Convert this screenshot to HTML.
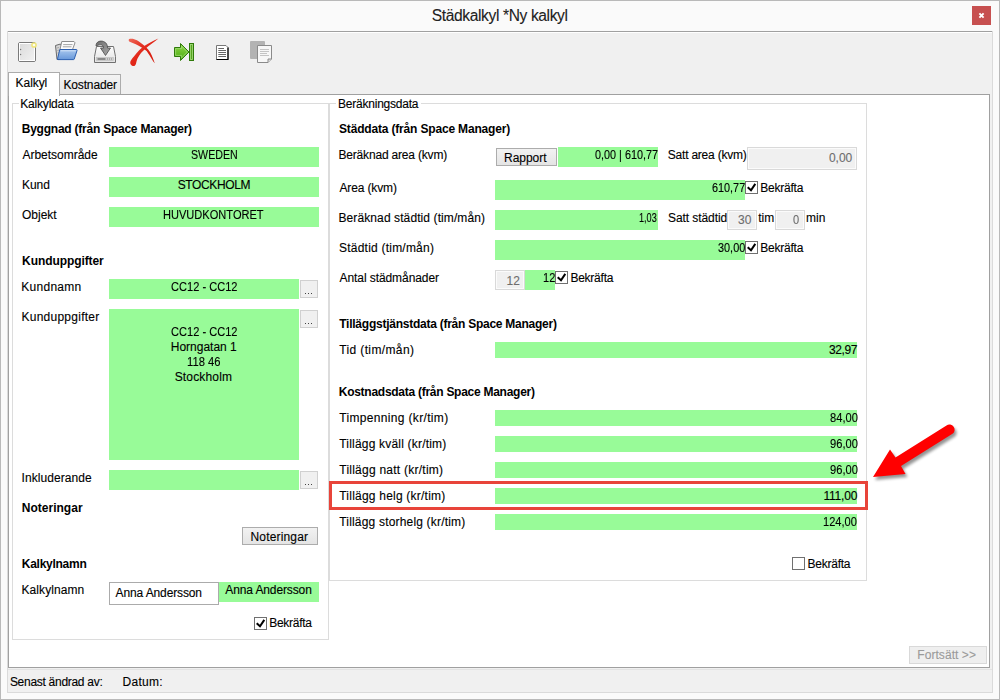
<!DOCTYPE html>
<html><head><meta charset="utf-8"><title>Städkalkyl</title>
<style>
html,body{margin:0;padding:0;width:1000px;height:700px;overflow:hidden;background:#fafafa}
body{position:relative;font-family:"Liberation Sans",sans-serif;font-size:12.0px;color:#000}
body>div,body>svg{position:absolute}
.t{position:absolute;line-height:14px;white-space:nowrap;transform-origin:0 0;-webkit-text-stroke:0.12px currentColor}
</style></head><body>
<div style="left:0px;top:0px;width:1000px;height:700px;background:#fafafa;border:1px solid #b9b9b9;box-sizing:border-box"></div>
<div class="t" id="tx0" style="left:431.75px;top:8.59px;font-size:15.6px;color:#222;letter-spacing:-0.380px;-webkit-text-stroke:0.1px currentColor;">Städkalkyl *Ny kalkyl</div>
<div style="left:972px;top:6px;width:19px;height:19px;background:#c75050"></div>
<svg style="position:absolute;left:972px;top:6px" width="19" height="19"><path d="M7.4 7.4L11.6 11.6M11.6 7.4L7.4 11.6" stroke="#fff" stroke-width="1.9"/></svg>
<div style="left:7px;top:31px;width:986px;height:662px;background:#f0f0f0;border-left:1px solid #dadada;border-right:1px solid #dadada;border-bottom:1px solid #dadada;box-sizing:border-box"></div>
<div style="left:8px;top:31px;width:984px;height:1px;background:#a0a0a0"></div>
<div style="left:8px;top:32px;width:984px;height:1px;background:#ffffff"></div>
<div style="left:59px;top:74px;width:62px;height:21px;background:linear-gradient(#f3f3f3,#e6e6e6);border:1px solid #acacac;box-sizing:border-box"></div>
<div class="t" id="tx1" style="left:63.40px;top:77.84px;letter-spacing:-0.138px;">Kostnader</div>
<div style="left:8px;top:94px;width:982px;height:574px;background:#fff;border:1px solid #a0a0a0;box-sizing:border-box"></div>
<div style="left:8px;top:72px;width:52px;height:24px;background:#fff;border:1px solid #acacac;border-bottom:none;box-sizing:border-box"></div>
<div class="t" id="tx2" style="left:15.60px;top:75.84px;letter-spacing:-0.070px;">Kalkyl</div>
<div style="left:12px;top:103px;width:317px;height:537px;border:1px solid #dcdcdc;box-sizing:border-box"></div>
<div style="left:19px;top:100px;width:58px;height:8px;background:#fff"></div>
<div class="t" id="tx3" style="left:20.30px;top:96.84px;letter-spacing:-0.200px;">Kalkyldata</div>
<div style="left:329px;top:103px;width:538px;height:478px;border:1px solid #dcdcdc;box-sizing:border-box"></div>
<div style="left:336px;top:100px;width:85px;height:8px;background:#fff"></div>
<div class="t" id="tx4" style="left:338.00px;top:96.84px;letter-spacing:-0.223px;">Beräkningsdata</div>
<div class="t" id="tx5" style="left:21.75px;top:121.84px;font-weight:bold;letter-spacing:-0.235px;-webkit-text-stroke:0;">Byggnad (från Space Manager)</div>
<div class="t" id="tx6" style="left:22.50px;top:147.84px;letter-spacing:-0.023px;">Arbetsområde</div>
<div style="left:109px;top:147px;width:210px;height:20px;background:#98fb98"></div>
<div class="t" id="tx7" style="left:190.86px;top:147.84px;transform:scaleX(0.8878);">SWEDEN</div>
<div class="t" id="tx8" style="left:21.88px;top:177.84px;">Kund</div>
<div style="left:109px;top:177px;width:210px;height:20px;background:#98fb98"></div>
<div class="t" id="tx9" style="left:177.70px;top:177.84px;letter-spacing:-0.369px;">STOCKHOLM</div>
<div class="t" id="tx10" style="left:22.00px;top:207.84px;">Objekt</div>
<div style="left:109px;top:207px;width:210px;height:20px;background:#98fb98"></div>
<div class="t" id="tx11" style="left:162.78px;top:207.84px;transform:scaleX(0.9222);">HUVUDKONTORET</div>
<div class="t" id="tx12" style="left:22.05px;top:253.84px;font-weight:bold;letter-spacing:-0.079px;-webkit-text-stroke:0;">Kunduppgifter</div>
<div class="t" id="tx13" style="left:21.20px;top:279.84px;letter-spacing:0.293px;">Kundnamn</div>
<div style="left:109px;top:279px;width:190px;height:20px;background:#98fb98"></div>
<div class="t" id="tx14" style="left:170.54px;top:279.84px;transform:scaleX(0.9226);">CC12 - CC12</div>
<div style="left:300px;top:280px;width:18px;height:18px;background:#f0f0f0;border:1px solid #d0d0d0;box-sizing:border-box"></div>
<div style="left:305px;top:293px;width:1px;height:1px;background:#444"></div>
<div style="left:308px;top:293px;width:1px;height:1px;background:#444"></div>
<div style="left:311px;top:293px;width:1px;height:1px;background:#444"></div>
<div class="t" id="tx15" style="left:21.50px;top:309.84px;letter-spacing:0.250px;">Kunduppgifter</div>
<div style="left:109px;top:309px;width:190px;height:151px;background:#98fb98"></div>
<div class="t" id="tx16" style="left:170.74px;top:324.84px;transform:scaleX(0.9226);">CC12 - CC12</div>
<div class="t" id="tx17" style="left:170.80px;top:339.84px;letter-spacing:-0.010px;">Horngatan 1</div>
<div class="t" id="tx18" style="left:186.87px;top:354.84px;transform:scaleX(0.9343);">118 46</div>
<div class="t" id="tx19" style="left:174.70px;top:369.84px;letter-spacing:0.156px;">Stockholm</div>
<div style="left:300px;top:310px;width:18px;height:18px;background:#f0f0f0;border:1px solid #d0d0d0;box-sizing:border-box"></div>
<div style="left:305px;top:323px;width:1px;height:1px;background:#444"></div>
<div style="left:308px;top:323px;width:1px;height:1px;background:#444"></div>
<div style="left:311px;top:323px;width:1px;height:1px;background:#444"></div>
<div class="t" id="tx20" style="left:21.50px;top:470.84px;letter-spacing:0.068px;">Inkluderande</div>
<div style="left:109px;top:470px;width:190px;height:20px;background:#98fb98"></div>
<div style="left:300px;top:471px;width:18px;height:18px;background:#f0f0f0;border:1px solid #d0d0d0;box-sizing:border-box"></div>
<div style="left:305px;top:484px;width:1px;height:1px;background:#444"></div>
<div style="left:308px;top:484px;width:1px;height:1px;background:#444"></div>
<div style="left:311px;top:484px;width:1px;height:1px;background:#444"></div>
<div class="t" id="tx21" style="left:21.75px;top:500.84px;font-weight:bold;letter-spacing:0.017px;-webkit-text-stroke:0;">Noteringar</div>
<div style="left:242px;top:527px;width:76px;height:18px;background:linear-gradient(#f2f2f2,#e4e4e4);border:1px solid #acacac;box-sizing:border-box"></div>
<div class="t" id="tx22" style="left:250.50px;top:529.84px;letter-spacing:0.167px;">Noteringar</div>
<div class="t" id="tx23" style="left:21.75px;top:556.84px;font-weight:bold;letter-spacing:-0.261px;-webkit-text-stroke:0;">Kalkylnamn</div>
<div class="t" id="tx24" style="left:21.50px;top:582.84px;letter-spacing:0.072px;">Kalkylnamn</div>
<div style="left:109px;top:582px;width:110px;height:23px;background:#fff;border:1px solid #ababab;box-sizing:border-box"></div>
<div class="t" id="tx25" style="left:115.60px;top:585.84px;letter-spacing:-0.127px;">Anna Andersson</div>
<div style="left:219px;top:582px;width:100px;height:20px;background:#98fb98"></div>
<div class="t" id="tx26" style="left:225.30px;top:582.84px;letter-spacing:-0.119px;">Anna Andersson</div>
<div style="left:254px;top:617px;width:13px;height:13px;background:#fff;border:1px solid #707070;box-sizing:border-box"></div>
<svg style="position:absolute;left:254px;top:617px" width="13" height="13"><path d="M2.7 6.2L6 9.2L10.3 2.9" fill="none" stroke="#000" stroke-width="2"/></svg>
<div class="t" id="tx27" style="left:269.20px;top:615.84px;letter-spacing:-0.279px;">Bekräfta</div>
<div class="t" id="tx28" style="left:339.00px;top:121.84px;font-weight:bold;letter-spacing:-0.171px;-webkit-text-stroke:0;">Städdata (från Space Manager)</div>
<div class="t" id="tx29" style="left:338.50px;top:147.84px;letter-spacing:-0.186px;">Beräknad area (kvm)</div>
<div style="left:496px;top:148px;width:61px;height:18px;background:linear-gradient(#f2f2f2,#e4e4e4);border:1px solid #acacac;box-sizing:border-box"></div>
<div class="t" id="tx30" style="left:504.00px;top:150.84px;letter-spacing:-0.025px;">Rapport</div>
<div style="left:558px;top:147px;width:100px;height:20px;background:#98fb98"></div>
<div class="t" id="tx31" style="left:595.15px;top:147.84px;transform:scaleX(0.9018);">0,00 | 610,77</div>
<div class="t" id="tx32" style="left:667.80px;top:147.84px;letter-spacing:-0.218px;">Satt area (kvm)</div>
<div style="left:747px;top:147px;width:110px;height:23px;background:#f0f0f0;border:1px solid #d9d9d9;box-shadow:inset 0 0 0 1px #fbfbfb;box-sizing:border-box"></div>
<div class="t" id="tx33" style="left:828.90px;top:150.84px;color:#6d6d6d;-webkit-text-stroke:0.1px currentColor;">0,00</div>
<div class="t" id="tx34" style="left:339.50px;top:180.84px;letter-spacing:-0.144px;">Area (kvm)</div>
<div style="left:495px;top:180px;width:250px;height:20px;background:#98fb98"></div>
<div class="t" id="tx35" style="left:712.05px;top:180.84px;transform:scaleX(0.9042);">610,77</div>
<div style="left:745px;top:181px;width:13px;height:13px;background:#fff;border:1px solid #707070;box-sizing:border-box"></div>
<svg style="position:absolute;left:745px;top:181px" width="13" height="13"><path d="M2.7 6.2L6 9.2L10.3 2.9" fill="none" stroke="#000" stroke-width="2"/></svg>
<div class="t" id="tx36" style="left:760.30px;top:180.84px;letter-spacing:-0.236px;">Bekräfta</div>
<div class="t" id="tx37" style="left:338.50px;top:210.84px;letter-spacing:0.098px;">Beräknad städtid (tim/mån)</div>
<div style="left:495px;top:210px;width:163px;height:20px;background:#98fb98"></div>
<div class="t" id="tx38" style="left:638.60px;top:210.84px;transform:scaleX(0.7616);">1,03</div>
<div class="t" id="tx39" style="left:668.10px;top:210.84px;letter-spacing:-0.086px;">Satt städtid</div>
<div style="left:727px;top:210px;width:30px;height:20px;background:#f0f0f0;border:1px solid #d9d9d9;box-shadow:inset 0 0 0 1px #fbfbfb;box-sizing:border-box"></div>
<div class="t" id="tx40" style="left:738.05px;top:212.84px;color:#6d6d6d;-webkit-text-stroke:0.1px currentColor;">30</div>
<div class="t" id="tx41" style="left:758.25px;top:210.84px;">tim</div>
<div style="left:775px;top:210px;width:30px;height:20px;background:#f0f0f0;border:1px solid #d9d9d9;box-shadow:inset 0 0 0 1px #fbfbfb;box-sizing:border-box"></div>
<div class="t" id="tx42" style="left:793.04px;top:212.84px;color:#6d6d6d;transform:scaleX(0.9217);-webkit-text-stroke:0.1px currentColor;">0</div>
<div class="t" id="tx43" style="left:805.98px;top:210.84px;">min</div>
<div class="t" id="tx44" style="left:339.00px;top:240.84px;letter-spacing:0.222px;">Städtid (tim/mån)</div>
<div style="left:495px;top:240px;width:250px;height:20px;background:#98fb98"></div>
<div class="t" id="tx45" style="left:717.85px;top:240.84px;transform:scaleX(0.9069);">30,00</div>
<div style="left:745px;top:241px;width:13px;height:13px;background:#fff;border:1px solid #707070;box-sizing:border-box"></div>
<svg style="position:absolute;left:745px;top:241px" width="13" height="13"><path d="M2.7 6.2L6 9.2L10.3 2.9" fill="none" stroke="#000" stroke-width="2"/></svg>
<div class="t" id="tx46" style="left:760.30px;top:240.84px;letter-spacing:-0.236px;">Bekräfta</div>
<div class="t" id="tx47" style="left:339.50px;top:270.84px;letter-spacing:-0.075px;">Antal städmånader</div>
<div style="left:495px;top:270px;width:30px;height:20px;background:#f0f0f0;border:1px solid #d9d9d9;box-shadow:inset 0 0 0 1px #fbfbfb;box-sizing:border-box"></div>
<div class="t" id="tx48" style="left:506.47px;top:273.84px;color:#6d6d6d;-webkit-text-stroke:0.1px currentColor;">12</div>
<div style="left:525px;top:270px;width:30px;height:20px;background:#98fb98"></div>
<div class="t" id="tx49" style="left:542.68px;top:270.84px;transform:scaleX(0.9191);">12</div>
<div style="left:555px;top:271px;width:13px;height:13px;background:#fff;border:1px solid #707070;box-sizing:border-box"></div>
<svg style="position:absolute;left:555px;top:271px" width="13" height="13"><path d="M2.7 6.2L6 9.2L10.3 2.9" fill="none" stroke="#000" stroke-width="2"/></svg>
<div class="t" id="tx50" style="left:570.40px;top:270.84px;letter-spacing:-0.236px;">Bekräfta</div>
<div class="t" id="tx51" style="left:339.25px;top:316.84px;font-weight:bold;letter-spacing:-0.249px;-webkit-text-stroke:0;">Tilläggstjänstdata (från Space Manager)</div>
<div class="t" id="tx52" style="left:339.25px;top:342.84px;letter-spacing:0.371px;">Tid (tim/mån)</div>
<div style="left:495px;top:342px;width:362px;height:16px;background:#98fb98"></div>
<div class="t" id="tx53" style="left:829.00px;top:342.84px;letter-spacing:-0.409px;">32,97</div>
<div class="t" id="tx54" style="left:338.75px;top:384.84px;font-weight:bold;letter-spacing:-0.266px;-webkit-text-stroke:0;">Kostnadsdata (från Space Manager)</div>
<div class="t" id="tx55" style="left:339.25px;top:410.84px;letter-spacing:0.333px;">Timpenning (kr/tim)</div>
<div style="left:495px;top:410px;width:362px;height:16px;background:#98fb98"></div>
<div class="t" id="tx56" style="left:829.54px;top:410.84px;transform:scaleX(0.9276);">84,00</div>
<div class="t" id="tx57" style="left:339.25px;top:436.84px;letter-spacing:0.195px;">Tillägg kväll (kr/tim)</div>
<div style="left:495px;top:436px;width:362px;height:16px;background:#98fb98"></div>
<div class="t" id="tx58" style="left:829.54px;top:436.84px;transform:scaleX(0.9276);">96,00</div>
<div class="t" id="tx59" style="left:339.25px;top:462.84px;letter-spacing:0.245px;">Tillägg natt (kr/tim)</div>
<div style="left:495px;top:462px;width:362px;height:16px;background:#98fb98"></div>
<div class="t" id="tx60" style="left:829.54px;top:462.84px;transform:scaleX(0.9276);">96,00</div>
<div class="t" id="tx61" style="left:339.25px;top:488.84px;letter-spacing:0.220px;">Tillägg helg (kr/tim)</div>
<div style="left:495px;top:488px;width:362px;height:16px;background:#98fb98"></div>
<div class="t" id="tx62" style="left:823.40px;top:488.84px;letter-spacing:-0.200px;">111,00</div>
<div class="t" id="tx63" style="left:339.25px;top:514.84px;letter-spacing:0.183px;">Tillägg storhelg (kr/tim)</div>
<div style="left:495px;top:514px;width:362px;height:16px;background:#98fb98"></div>
<div class="t" id="tx64" style="left:823.48px;top:514.84px;transform:scaleX(0.9220);">124,00</div>
<div style="left:792px;top:557px;width:13px;height:13px;background:#fff;border:1px solid #707070;box-sizing:border-box"></div>
<div class="t" id="tx65" style="left:807.50px;top:556.84px;letter-spacing:-0.236px;">Bekräfta</div>
<div style="left:329px;top:481px;width:539px;height:29px;border:3px solid #e8443a;box-sizing:border-box"></div>
<svg style="position:absolute;left:860px;top:415px" width="110" height="75">
<defs><filter id="sh" x="-30%" y="-30%" width="160%" height="160%"><feGaussianBlur stdDeviation="1.6"/></filter></defs>
<g transform="translate(-860,-415)">
<path d="M873 477L890 449.5L895.5 457.5L946.5 425.5A4.9 4.9 0 0 1 952.5 433.8L901 466L905.5 474Z" fill="#000" opacity="0.42" filter="url(#sh)" transform="translate(2,3)"/>
<path d="M873 477L890 449.5L895.5 457.5L946.5 425.5A4.9 4.9 0 0 1 952.5 433.8L901 466L905.5 474Z" fill="#ff0000"/>
</g></svg>
<div style="left:909px;top:646px;width:78px;height:18px;background:#efefef;border:1px solid #d9d9d9;box-sizing:border-box"></div>
<div class="t" id="tx66" style="left:917.30px;top:647.84px;color:#9a9a9a;letter-spacing:0.060px;-webkit-text-stroke:0.1px currentColor;">Fortsätt &gt;&gt;</div>
<div style="left:8px;top:669px;width:984px;height:1px;background:#e3e3e3"></div>
<div class="t" id="tx67" style="left:9.90px;top:674.84px;letter-spacing:-0.284px;">Senast ändrad av:</div>
<div class="t" id="tx68" style="left:122.60px;top:674.84px;letter-spacing:0.250px;">Datum:</div>
<svg style="position:absolute;left:0;top:0" width="300" height="72">
<defs>
<linearGradient id="ndg" x1="0" y1="0" x2="1" y2="1"><stop offset="0" stop-color="#d9d9d9"/><stop offset="1" stop-color="#f3f3f3"/></linearGradient>
<linearGradient id="fdb" x1="0" y1="0" x2="0" y2="1"><stop offset="0" stop-color="#a9c8ee"/><stop offset="1" stop-color="#6898da"/></linearGradient>
<linearGradient id="rdx" x1="0" y1="0" x2="1" y2="1"><stop offset="0" stop-color="#ee6a5a"/><stop offset="0.45" stop-color="#e2281a"/><stop offset="1" stop-color="#d41a0a"/></linearGradient>
<linearGradient id="gra" x1="0" y1="0" x2="0" y2="1"><stop offset="0" stop-color="#8fd84a"/><stop offset="1" stop-color="#4aa80e"/></linearGradient>
<linearGradient id="drv" x1="0" y1="0" x2="0" y2="1"><stop offset="0" stop-color="#fdfdfd"/><stop offset="1" stop-color="#e2e2e2"/></linearGradient>
<linearGradient id="arw" x1="0" y1="0" x2="1" y2="1"><stop offset="0" stop-color="#6e6e6e"/><stop offset="1" stop-color="#a8a8a8"/></linearGradient>
</defs>
<!-- new document -->
<rect x="18.5" y="42.5" width="17" height="19" rx="1.5" fill="url(#ndg)" stroke="#7a7a7a"/>
<rect x="19.5" y="43.5" width="15" height="17" fill="none" stroke="#fff"/>
<circle cx="20.6" cy="49.5" r="0.7" fill="#777"/>
<circle cx="20.6" cy="54.5" r="0.7" fill="#777"/>
<circle cx="34" cy="45" r="2.1" fill="#fdfdf0" stroke="#efe57a" stroke-width="1.5"/>
<!-- open folder -->
<path d="M55.5 45.5L60.5 44L62 46.5L66 46.5L60 59.5L57 59.5Z" fill="#d6d6d6" stroke="#6a6a6a" stroke-linejoin="round"/>
<path d="M57 48L59 47.5M57.3 50.5L59.5 50M57.6 53L60 52.5" stroke="#9a9a9a" stroke-width="0.8"/>
<path d="M61.8 41.5L74 41.5L75 42.8L72.5 49.5L60 49.5Z" fill="#fdfdfd" stroke="#8c8c8c" stroke-linejoin="round"/>
<path d="M63.2 44.6H72.5M62.8 46.8H71.5" stroke="#9a9a9a" stroke-width="0.9"/>
<path d="M59.8 49.5L76.5 49.5Q77.3 49.6 77 50.6L74.2 59.2Q74 59.6 73.5 59.6L58 59.6Q57.3 59.6 57.5 58.9Z" fill="url(#fdb)" stroke="#2c5fb0" stroke-linejoin="round"/>
<path d="M60.8 50.8L75.8 50.8" stroke="#d0e2f7" stroke-width="1"/>
<!-- save to drive -->
<path d="M96.5 46.5L113.5 46.5L115.5 56.5L115.5 62.5L94.5 62.5L94.5 56.5Z" fill="url(#drv)" stroke="#707070"/>
<rect x="96.5" y="57.5" width="17" height="3" fill="#d0d0d0" stroke="#bbb" stroke-width="0.6"/>
<rect x="97.5" y="58" width="8" height="2" fill="#8a8a8a"/><path d="M107.5 58V60M109.5 58V60M111.5 58V60" stroke="#999" stroke-width="0.7"/>
<path d="M96 46C96 41 101 40.5 103.5 41.5C106.5 42.5 107.5 45 107.5 48L110.5 48L105.5 55.5L100.5 48L103.5 48C103.5 46 102.5 44.8 100.5 44.8C98.5 44.8 97.5 45.5 96 46Z" fill="url(#arw)" stroke="#4a4a4a" stroke-width="0.8" stroke-linejoin="round"/>
<!-- red X -->
<path d="M129.1 38.9C132 38.3 134.5 39 136.9 40.2C139 41.3 141.5 43.3 143.5 45C145.3 46.5 146.9 47.9 148.2 49.4C149.8 51.3 151 53.3 151.8 55.6C152.9 58.2 154 60.8 154.8 63.3C153.9 62.4 153.4 61.5 152.8 60.7C150.9 57.4 148.8 54.2 146.6 51C145.3 50 144 49 142.5 48.1C140.3 46.7 138 45.4 135.8 44.3C133.8 43.4 131.7 42.6 129.7 41.7C128.6 41 128.4 39.6 129.1 38.9Z" fill="url(#rdx)"/>
<path d="M158.4 38.4C155.8 39.5 153.2 40.8 150.7 42.2C148.6 43.4 146.5 44.5 144.6 45.8C142.8 47.2 141 48.5 139.4 49.9C137.5 51.8 135.8 53.9 134.3 56.1C133 57.6 131.6 59.1 130.7 60.7C129.8 62.4 130.2 64.5 131.7 65.4C132.5 65.9 133.5 66.1 134.3 65.9C135.4 65.5 135.9 64.4 136.1 63.3C136.4 61.7 136.8 60.2 137.4 58.7C138.5 56.7 139.7 54.8 141 53C142.4 51.4 144 49.9 145.6 48.4C147.8 46.6 150 44.9 152.3 43.3C154.3 41.6 156.4 40 158.4 38.4Z" fill="url(#rdx)"/>
<!-- green arrow to bar -->
<path d="M174.5 47.5L180.5 47.5L180.5 43.5L189 52L180.5 60.5L180.5 56.5L174.5 56.5Z" fill="url(#gra)" stroke="#2f7a0a" stroke-linejoin="round"/>
<path d="M175.6 48.6L181.6 48.6L181.6 46.2L187.4 52L181.6 57.8L181.6 55.4L175.6 55.4Z" fill="none" stroke="#a6de7e" stroke-width="0.7" stroke-linejoin="round"/>
<rect x="189.5" y="43.5" width="4" height="17" fill="#4f9e1c" stroke="#2f7a0a"/>
<rect x="190.5" y="44.5" width="2" height="15" fill="#56a420" stroke="#a6de7e" stroke-width="0.8"/>
<!-- doc -->
<path d="M216.5 45.5L226 45.5L228 47.5L228 59.5L216.5 59.5Z" fill="#fff" stroke="#777"/>
<path d="M228 47.5L228 59.5L216.5 59.5" fill="none" stroke="#000" stroke-width="1.2"/>
<path d="M218.3 48.5H224M218.3 50.5H226M218.3 52.5H226M218.3 54.5H226M218.3 56.5H226" stroke="#555" stroke-width="0.9"/>
<!-- copy -->
<rect x="250" y="41" width="15" height="18" rx="1" fill="#b3b3b3"/>
<path d="M257.5 45.5L271.5 45.5L271.5 59L268 62.5L257.5 62.5Z" fill="#f7f7f7" stroke="#8a8a8a"/>
<path d="M271.5 59L268 59L268 62.5" fill="#ddd" stroke="#8a8a8a"/>
<path d="M260 49.5H269M260 51.5H269M260 53.5H267M260 55.5H269" stroke="#bdbdbd" stroke-width="0.9"/>
</svg>

</body></html>
